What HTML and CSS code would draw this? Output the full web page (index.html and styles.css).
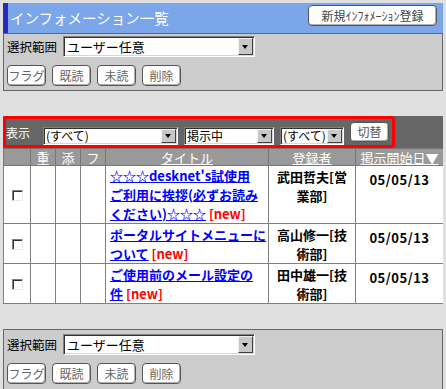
FILE: index.html
```html
<!DOCTYPE html>
<html lang="ja">
<head>
    <meta charset="UTF-8">
    <title>インフォメーション一覧</title>
    <link rel="stylesheet" href="styles.css">
</head>
<body>

<div class="head">
    <h1>インフォメーション一覧</h1>
    <button class="btn btn-new" type="button">新規ｲﾝﾌｫﾒｰｼｮﾝ登録</button>
</div>

<div class="panel">
    <div class="row">
        <label>選択範囲</label>
        <span class="sel sel-range"><select><option>ユーザー任意</option></select><i class="arrow"></i></span>
    </div>
    <div class="btns">
        <button class="btn" type="button">フラグ</button>
        <button class="btn" type="button">既読</button>
        <button class="btn" type="button">未読</button>
        <button class="btn" type="button">削除</button>
    </div>
</div>

<div class="listbar">
    <div class="filter">
        <span class="filter-label">表示</span>
        <span class="sel sel-a"><select><option>(すべて)</option></select><i class="arrow"></i></span>
        <span class="sel sel-b"><select><option>掲示中</option></select><i class="arrow"></i></span>
        <span class="sel sel-c"><select><option>(すべて)</option></select><i class="arrow"></i></span>
        <button class="btn btn-switch" type="button">切替</button>
    </div>
</div>

<table class="list">
    <colgroup>
        <col style="width:27px">
        <col style="width:25px">
        <col style="width:25px">
        <col style="width:25px">
        <col style="width:163px">
        <col style="width:87px">
        <col style="width:88px">
    </colgroup>
    <tr class="hd">
        <th></th>
        <th>重</th>
        <th>添</th>
        <th>フ</th>
        <th><u>タイトル</u></th>
        <th><u>登録者</u></th>
        <th><u>掲示開始日▼</u></th>
    </tr>
    <tr class="r1">
        <td class="chk"><input type="checkbox"></td>
        <td></td><td></td><td></td>
        <td class="title"><a href="#">☆☆☆desknet's試使用<br>ご利用に挨拶(必ずお読み<br>ください)☆☆☆</a> <span class="new">[new]</span></td>
        <td class="name">武田哲夫[営<br>業部]</td>
        <td class="date">05/05/13</td>
    </tr>
    <tr class="r2">
        <td class="chk"><input type="checkbox"></td>
        <td></td><td></td><td></td>
        <td class="title"><a href="#">ポータルサイトメニューに<br>ついて</a> <span class="new">[new]</span></td>
        <td class="name">高山修一[技<br>術部]</td>
        <td class="date">05/05/13</td>
    </tr>
    <tr class="r2">
        <td class="chk"><input type="checkbox"></td>
        <td></td><td></td><td></td>
        <td class="title"><a href="#">ご使用前のメール設定の<br>件</a> <span class="new">[new]</span></td>
        <td class="name">田中雄一[技<br>術部]</td>
        <td class="date">05/05/13</td>
    </tr>
</table>

<div class="panel panel-bottom">
    <div class="row">
        <label>選択範囲</label>
        <span class="sel sel-range"><select><option>ユーザー任意</option></select><i class="arrow"></i></span>
    </div>
    <div class="btns">
        <button class="btn" type="button">フラグ</button>
        <button class="btn" type="button">既読</button>
        <button class="btn" type="button">未読</button>
        <button class="btn" type="button">削除</button>
    </div>
</div>

</body>
</html>
```

FILE: styles.css
```css
body {
    margin: 3px;
    background-color: #e0e0e0;
    font-family: "Noto Sans CJK JP", sans-serif;
    font-size: 13px;
    color: #000;
}
.head {
    display: flex;
    justify-content: space-between;
    align-items: flex-start;
    height: 30px;
    box-sizing: border-box;
    padding: 2px 6px 0 2px;
    background-color: #7ba6e9;
    border-left: 5px solid #2a2ab8;
}
.head h1 {
    margin: 0;
    font-size: 14.5px;
    font-weight: normal;
    line-height: 26px;
    color: #fff;
}
.btn {
    height: 21px;
    width: 39px;
    padding: 0;
    background-color: #fff;
    border: 1px solid #555;
    border-radius: 4px;
    box-shadow: inset -1px -1px 0 #b0b0b0;
    font-family: "Noto Sans CJK JP", sans-serif;
    font-size: 12px;
    line-height: 18px;
    color: #666;
}
.btn-new {
    width: 129px;
    color: #444;
}
.panel {
    background-color: #ccc;
    border: 1px solid #666;
    padding: 2px 3px 4px;
}
.panel-bottom {
    margin-top: 25px;
    padding-top: 4px;
    padding-bottom: 7px;
}
.row {
    display: flex;
    align-items: center;
    gap: 6px;
}
.row label {
    font-size: 12.5px;
}
.btns {
    display: flex;
    gap: 6px;
    margin-top: 8px;
}
.sel {
    position: relative;
    display: inline-block;
}
.sel select {
    appearance: none;
    display: block;
    box-sizing: border-box;
    height: 21px;
    padding: 0 18px 0 3px;
    background-color: #fff;
    border: 1px solid;
    border-color: #808080 #fff #fff #808080;
    box-shadow: inset 1px 1px 0 #333, inset -1px -1px 0 #d8d8d8;
    border-radius: 0;
    font-family: "Noto Sans CJK JP", sans-serif;
    font-size: 13px;
    color: #000;
}
.sel .arrow {
    position: absolute;
    top: 2px;
    right: 2px;
    bottom: 2px;
    width: 15px;
    box-sizing: border-box;
    background-color: #c8c8c8;
    border: 1px solid;
    border-color: #f0f0f0 #404040 #404040 #f0f0f0;
}
.sel .arrow::after {
    content: "";
    position: absolute;
    left: 3px;
    top: 50%;
    margin-top: -2px;
    border-left: 3.5px solid transparent;
    border-right: 3.5px solid transparent;
    border-top: 4px solid #000;
}
.sel-range select { width: 192px; }
.listbar {
    margin-top: 25px;
    background-color: #666;
}
.filter {
    display: flex;
    align-items: flex-start;
    gap: 6px;
    width: 392px;
    height: 32px;
    box-sizing: border-box;
    border: 3px solid #f00;
    border-radius: 3px;
    padding-right: 2px;
}
.filter-label {
    align-self: center;
    margin-right: 7px;
    font-size: 12px;
    color: #fff;
}
.filter .sel {
    margin-top: 8px;
}
.filter .sel select {
    height: 18px;
    padding: 0 16px 0 2px;
    font-size: 12px;
    line-height: 14px;
}
.sel-a select { width: 135px; }
.sel-b select { width: 90px; }
.sel-c select { width: 64px; }
.btn-switch {
    margin-top: 3px;
    height: 20px;
    color: #555;
}
.list {
    width: 440px;
    table-layout: fixed;
    border-collapse: collapse;
}
.list th {
    padding: 0;
    background-color: #999;
    border: 1px solid #777;
    font-weight: normal;
    font-size: 13px;
    line-height: 15px;
    color: #fff;
}
.list td {
    padding: 0;
    background-color: #fff;
    border: 1px solid #808080;
}
.hd { height: 17px; }
.r1 { height: 58px; }
.r2 { height: 39px; }
.chk {
    text-align: center;
    vertical-align: middle;
    line-height: 13px;
}
.chk input {
    appearance: none;
    display: inline-block;
    vertical-align: middle;
    width: 11px;
    height: 11px;
    margin: 0;
    background-color: #fff;
    border: 1px solid;
    border-color: #808080 #e8e8e8 #e8e8e8 #808080;
    box-shadow: inset 1px 1px 0 #333;
}
.list .title {
    vertical-align: middle;
    padding: 0 2px 0 4px;
    font-weight: bold;
    line-height: 19px;
}
.title a {
    color: #00f;
}
.new {
    color: #f00;
}
.list .name, .list .date {
    vertical-align: top;
    text-align: center;
    padding-top: 1px;
    font-weight: bold;
    line-height: 19px;
}
.list .date {
    padding-top: 5px;
    line-height: 17px;
    letter-spacing: 0.5px;
}
```
